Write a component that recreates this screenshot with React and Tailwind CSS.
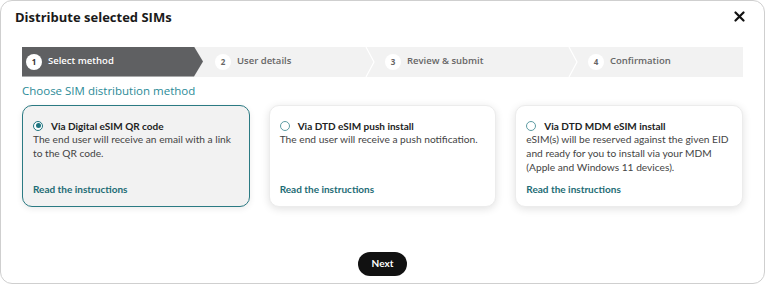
import React from 'react';

const steps = [
    { n: 1, label: 'Select method', w: 'w-[181px]' },
    { n: 2, label: 'User details', w: 'w-[167px]' },
    { n: 3, label: 'Review & submit', w: 'w-[203px]' },
    { n: 4, label: 'Confirmation', w: 'flex-1' },
];

const methods = [
    {
        title: 'Via Digital eSIM QR code',
        text: 'The end user will receive an email with a link to the QR code.',
        selected: true,
    },
    {
        title: 'Via DTD eSIM push install',
        text: 'The end user will receive a push notification.',
    },
    {
        title: 'Via DTD MDM eSIM install',
        text: 'eSIM(s) will be reserved against the given EID and ready for you to install via your MDM (Apple and Windows 11 devices).',
    },
];

const Chevron = () => (
    <svg width="10" height="30" viewBox="0 0 10 30" className="shrink-0 -mx-[5px] relative z-10">
        <polyline points="1,0 9,15 1,30" fill="none" stroke="#ffffff" strokeWidth="1.2" />
    </svg>
);

const Stepper = () => (
    <div className="flex h-[30px] bg-[#f2f2f2] font-['Open_Sans',sans-serif]">
        {steps.map((s, i) => {
            const active = i === 0;
            return (
                <React.Fragment key={s.n}>
                    {i > 1 && <Chevron />}
                    <div
                        className={
                            `${s.w} flex items-center h-full ` +
                            (active
                                ? 'bg-[#5f6062] pl-[4px] [clip-path:polygon(0_0,calc(100%-9px)_0,100%_50%,calc(100%-9px)_100%,0_100%)]'
                                : i === 1 ? 'pl-[12px]' : 'pl-[15px]')
                        }
                    >
                        <span
                            className={
                                'w-[16px] h-[16px] rounded-full bg-white flex items-center justify-center text-[8px] font-bold ' +
                                (active ? 'text-[#333]' : 'text-[#666]')
                            }
                        >
                            {s.n}
                        </span>
                        <span
                            className={
                                'ml-[6px] text-[9.5px] font-semibold ' +
                                (active ? 'text-white font-bold' : 'text-[#666]')
                            }
                        >
                            {s.label}
                        </span>
                    </div>
                </React.Fragment>
            );
        })}
    </div>
);

const Radio = ({ checked }) => (
    <span
        className={
            'w-[10px] h-[10px] rounded-full border flex items-center justify-center shrink-0 ' +
            (checked ? 'border-[#1f7580] bg-white' : 'border-[#5d9ca3] bg-white')
        }
    >
        {checked && <span className="w-[5px] h-[5px] rounded-full bg-[#1f7580]" />}
    </span>
);

const MethodCard = ({ title, text, selected }) => (
    <div
        className={
            'flex-1 h-[102px] rounded-[10px] flex flex-col pl-[10px] pr-[8px] pt-[14px] pb-[11px] ' +
            (selected
                ? 'bg-[#f2f2f2] border-[1.5px] border-[#2b7a83] shadow-[0_2px_6px_rgba(0,0,0,0.08)]'
                : 'bg-white border border-[#ececec] shadow-[0_2px_8px_rgba(0,0,0,0.12)]')
        }
    >
        <div className="flex items-center gap-[8px] h-[12px]">
            <Radio checked={selected} />
            <span className="text-[10px] leading-[12px] font-bold text-[#222]">{title}</span>
        </div>
        <p className="text-[10.2px] leading-[14px] text-[#444]">{text}</p>
        <a className="mt-auto text-[10px] leading-[12px] font-bold text-[#1d6c75]">Read the instructions</a>
    </div>
);

export default function App() {
    return (
        <div className="w-[767px] h-[285px] bg-white font-['Lato',sans-serif]">
            <div className="w-[765px] h-[284px] border border-[#cfcfcf] rounded-[12px] flex flex-col px-[21px]">
                <div className="flex items-center justify-between pt-[7px] -ml-[7px] -mr-[8px]">
                    <h1 className="text-[13px] font-bold text-[#1a1a1a] font-['Open_Sans',sans-serif]">
                        Distribute selected SIMs
                    </h1>
                    <svg width="11" height="11" viewBox="0 0 11 11" className="mr-[6px] -mt-[2px]">
                        <path d="M1.5 1.5 L9.5 9.5 M9.5 1.5 L1.5 9.5" stroke="#111" strokeWidth="2.2" strokeLinecap="round" />
                    </svg>
                </div>
                <div className="mt-[19px]">
                    <Stepper />
                </div>
                <p className="mt-[5px] text-[11.5px] text-[#2b8b97] font-['Open_Sans',sans-serif]">
                    Choose SIM distribution method
                </p>
                <div className="mt-[6px] flex gap-[19px]">
                    {methods.map((m) => (
                        <MethodCard key={m.title} {...m} />
                    ))}
                </div>
                <div className="flex justify-center mt-[45px]">
                    <button className="w-[49px] h-[24px] rounded-full bg-[#111] text-white text-[10px] font-bold">
                        Next
                    </button>
                </div>
            </div>
        </div>
    );
}
